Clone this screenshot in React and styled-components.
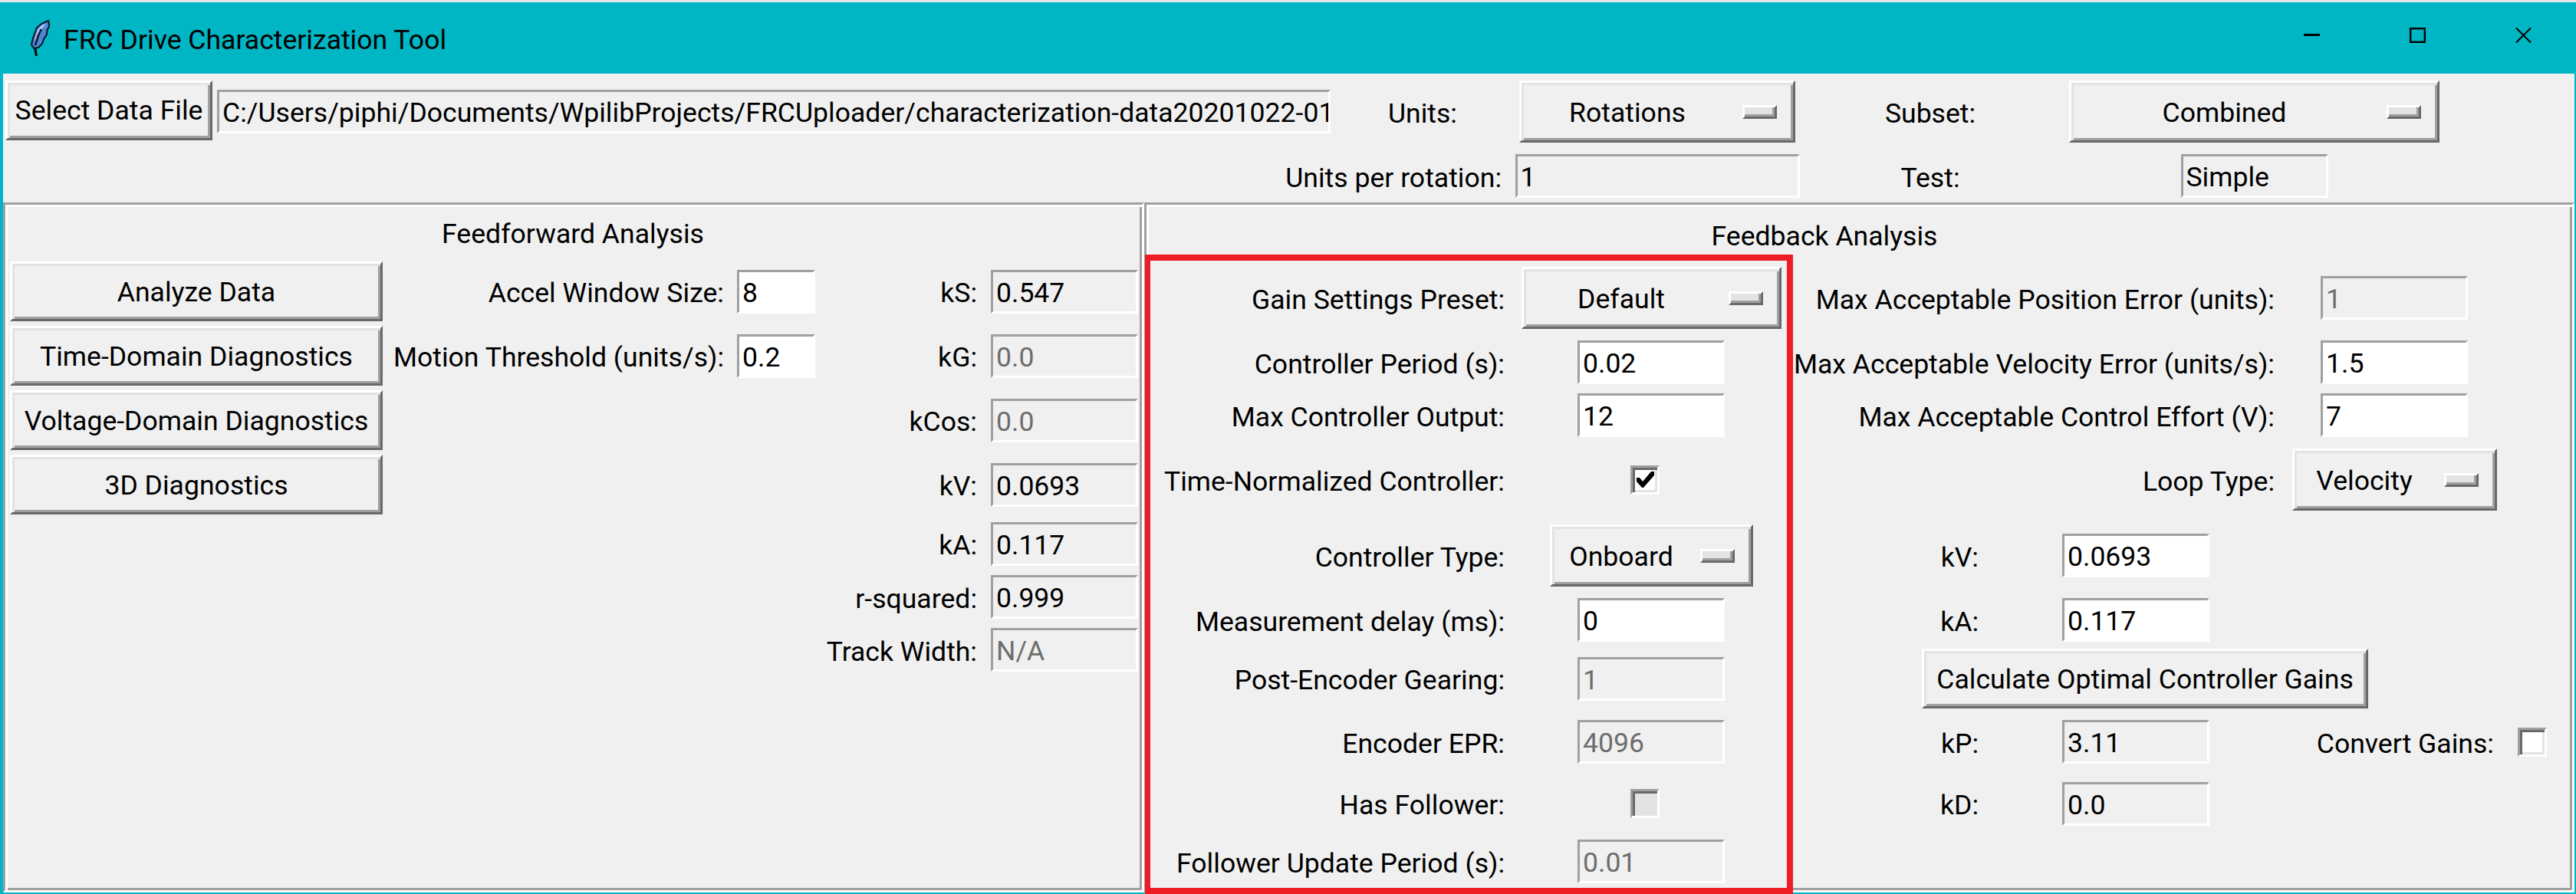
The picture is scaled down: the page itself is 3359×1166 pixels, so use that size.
import styled, { createGlobalStyle, css } from 'styled-components'

const GlobalStyle = createGlobalStyle`
  html, body {
    margin: 0;
    padding: 0;
    background: #00b5c4;
    overflow: hidden;
  }
  body {
    font-family: Roboto, "Noto Sans", "Liberation Sans", sans-serif;
    font-size: 35.6px;
    color: #000;
  }
`

const raised = css`
  box-sizing: border-box;
  border: 3px solid;
  border-color: #fff #696969 #696969 #fff;
  box-shadow: inset 3px 3px 0 #e3e3e3, inset -3px -3px 0 #a0a0a0;
`

const Window = styled.div`
  position: relative;
  width: 3359px;
  height: 1166px;
  box-sizing: border-box;
  border-top: 3px solid #e6e6e6;
  background: #00b5c4;
  display: flex;
  flex-direction: column;
  overflow: hidden;
`

const TitleBar = styled.div`
  height: 93px;
  flex: none;
  display: flex;
  align-items: center;
  padding-left: 40px;
`

const Title = styled.div`
  margin-left: 18px;
  flex: 1;
  padding-top: 4px;
`

const WinButton = styled.div`
  width: 138px;
  height: 93px;
  display: flex;
  align-items: center;
  justify-content: center;
  padding-bottom: 8px;
  box-sizing: border-box;
`

const Body = styled.div`
  flex: 1;
  margin: 0 2px 2px 4px;
  background: #f0f0f0;
  display: flex;
  flex-direction: column;
`

const Toolbar = styled.div`
  height: 168px;
  flex: none;
  box-sizing: border-box;
  padding: 6px 0 0 3px;
  display: grid;
  grid-template-columns: 273px 1460px 230px 382px 330px 515px;
  grid-template-rows: 87px 57px;
  row-gap: 12px;
  align-items: center;
`

const Panels = styled.div`
  flex: 1;
  display: flex;
`

const Panel = styled.div`
  box-sizing: border-box;
  height: 900px;
  width: ${(p) => p.$width}px;
  flex: none;
  border: 3px solid;
  border-color: #a0a0a0 #fff #fff #a0a0a0;
  box-shadow: inset 3px 3px 0 #fff, inset -3px -3px 0 #a0a0a0;
  padding-left: 3px;
  display: grid;
  grid-template-columns: ${(p) => p.$cols};
  grid-template-rows: ${(p) => p.$rows};
  align-items: center;
`

const PanelTitle = styled.div`
  grid-column: ${(p) => p.$span};
  grid-row: 1;
  text-align: center;
  padding-top: 4px;
`

const Label = styled.div`
  grid-column: ${(p) => p.$col || 'auto'};
  grid-row: ${(p) => p.$row || 'auto'};
  justify-self: ${(p) => p.$justify || 'end'};
  padding-right: ${(p) => (p.$pad === undefined ? 6 : p.$pad)}px;
  padding-top: 4px;
  white-space: nowrap;
`

const Entry = styled.div`
  grid-column: ${(p) => p.$col || 'auto'};
  grid-row: ${(p) => p.$row || 'auto'};
  justify-self: ${(p) => p.$justify || 'center'};
  box-sizing: border-box;
  width: ${(p) => p.$width || 192}px;
  height: 57px;
  margin-left: ${(p) => p.$left || 0}px;
  border: 3px solid;
  border-color: #a0a0a0 #fff #fff #a0a0a0;
  background: ${(p) => (p.$on ? '#fff' : '#f0f0f0')};
  color: ${(p) => (p.$off ? '#6d6d6d' : '#000')};
  padding: 1px 0 0 4px;
  line-height: 52px;
  white-space: nowrap;
  overflow: hidden;
`

const Button = styled.div`
  ${raised}
  grid-column: ${(p) => p.$col || 'auto'};
  grid-row: ${(p) => p.$row || 'auto'};
  justify-self: ${(p) => p.$justify || 'center'};
  width: ${(p) => p.$width}px;
  height: 78px;
  margin-left: ${(p) => p.$left || 0}px;
  margin-bottom: ${(p) => p.$lift || 0}px;
  padding-top: ${(p) => (p.$lift ? 0 : 2)}px;
  display: flex;
  align-items: center;
  justify-content: center;
  white-space: nowrap;
`

const MenuBox = styled.div`
  ${raised}
  grid-column: ${(p) => p.$col || 'auto'};
  grid-row: ${(p) => p.$row || 'auto'};
  justify-self: center;
  width: ${(p) => p.$width}px;
  height: 81px;
  display: flex;
  align-items: center;
`

const MenuText = styled.div`
  flex: 1;
  text-align: center;
  padding: 3px 12px 0 0;
`

const Indicator = styled.div`
  ${raised}
  width: 45px;
  height: 18px;
  flex: none;
  margin-right: 21px;
  box-shadow: inset -3px -3px 0 #a0a0a0;
  background: #e3e3e3;
`

const CheckBox = styled.div`
  grid-column: ${(p) => p.$col || 'auto'};
  grid-row: ${(p) => p.$row || 'auto'};
  justify-self: center;
  box-sizing: border-box;
  width: 38px;
  height: 38px;
  margin-right: ${(p) => p.$shift || 0}px;
  border: 3px solid;
  border-color: #a0a0a0 #fff #fff #a0a0a0;
  box-shadow: inset 3px 3px 0 #696969, inset -3px -3px 0 #e3e3e3;
  background: ${(p) => (p.$off ? '#e3e3e3' : '#fff')};
  display: flex;
  align-items: center;
  justify-content: center;
`

const RedBox = styled.div`
  position: absolute;
  left: 1493px;
  top: 329px;
  width: 845px;
  height: 834px;
  box-sizing: border-box;
  border: 8px solid #ee1c25;
  border-left-width: 7px;
  pointer-events: none;
`

function Feather() {
  return (
    <svg width="25" height="47" viewBox="0 0 25 47">
      <path d="M5 33 L7.5 47" stroke="#050505" strokeWidth="3" fill="none" />
      <path
        d="M23 1 L24.5 8 L21.5 13 L21 19 L17 25 L15 31 L10 36 L4 37 L1 32 L3 24 L5 18 L8 10 L14 5 Z"
        fill="#4f86d8"
        stroke="#0b1420"
        strokeWidth="2"
      />
      <path d="M20 5 L14 7 L9 13 L6 22 L5 29 L9 21 L13 14 Z" fill="#a9c4ef" />
      <path d="M14 12 L10 20 L6 33" stroke="#0c1a34" strokeWidth="2.6" fill="none" />
    </svg>
  )
}

function Check() {
  return (
    <svg width="23" height="21" viewBox="0 0 23 21">
      <path d="M0 8 L4 8 L8 13 L19 0 L23 0 L23 5 L9 21 L7 21 L0 13 Z" fill="#000" />
    </svg>
  )
}

function Menu({ text, width, col, row }) {
  return (
    <MenuBox $width={width} $col={col} $row={row}>
      <MenuText>{text}</MenuText>
      <Indicator />
    </MenuBox>
  )
}

const leftButtons = [
  'Analyze Data',
  'Time-Domain Diagnostics',
  'Voltage-Domain Diagnostics',
  '3D Diagnostics',
]

const leftValues = [
  { label: 'kS:', value: '0.547' },
  { label: 'kG:', value: '0.0', off: true },
  { label: 'kCos:', value: '0.0', off: true },
  { label: 'kV:', value: '0.0693' },
  { label: 'kA:', value: '0.117' },
  { label: 'r-squared:', value: '0.999' },
  { label: 'Track Width:', value: 'N/A', off: true },
]

export default function App() {
  return (
    <>
      <GlobalStyle />
      <Window>
        <TitleBar>
          <Feather />
          <Title>FRC Drive Characterization Tool</Title>
          <WinButton>
            <svg width="21" height="3"><rect width="21" height="3" fill="#000" /></svg>
          </WinButton>
          <WinButton>
            <svg width="21" height="20"><rect x="1.2" y="1.2" width="18.6" height="17.6" fill="none" stroke="#000" strokeWidth="2.4" /></svg>
          </WinButton>
          <WinButton>
            <svg width="21" height="20"><path d="M1 0.5 L20 19.5 M20 0.5 L1 19.5" stroke="#000" strokeWidth="2" /></svg>
          </WinButton>
        </TitleBar>
        <Body>
          <Toolbar>
            <Button $width={270} $col="1" $row="1" $justify="start" $lift={3}>Select Data File</Button>
            <Entry $width={1452} $col="2" $row="1" $justify="start" $left={3}>
              C:/Users/piphi/Documents/WpilibProjects/FRCUploader/characterization-data20201022-0133
            </Entry>
            <Label $col="3" $row="1" $justify="center" $pad={0}>Units:</Label>
            <Menu text="Rotations" width={360} col="4" row="1" />
            <Label $col="5" $row="1" $justify="center" $pad={0}>Subset:</Label>
            <Menu text="Combined" width={483} col="6" row="1" />
            <Label $col="2 / 4" $row="2" $pad={12}>Units per rotation:</Label>
            <Entry $width={371} $col="4" $row="2">1</Entry>
            <Label $col="5" $row="2" $justify="center" $pad={0}>Test:</Label>
            <Entry $col="6" $row="2">Simple</Entry>
          </Toolbar>
          <Panels>
            <Panel
              $width={1488}
              $cols="492px 448px 124px 206px 204px"
              $rows="71px 84px 84px 84px 84px 70px 69px 69px"
            >
              <PanelTitle $span="1 / -1">Feedforward Analysis</PanelTitle>
              {leftButtons.map((text, i) => (
                <Button key={text} $width={486} $col="1" $row={i + 2}>{text}</Button>
              ))}
              <Label $col="2" $row="2">Accel Window Size:</Label>
              <Entry $on $width={102} $col="3" $row="2">8</Entry>
              <Label $col="2" $row="3">Motion Threshold (units/s):</Label>
              <Entry $on $width={102} $col="3" $row="3">0.2</Entry>
              {leftValues.map((item, i) => [
                <Label key={item.label} $col="4" $row={i + 2}>{item.label}</Label>,
                <Entry key={item.label + 'v'} $off={item.off} $col="5" $row={i + 2} $justify="end">
                  {item.value}
                </Entry>,
              ])}
            </Panel>
            <Panel
              $width={1865}
              $cols="470px 370px 248px 398px 276px 84px"
              $rows="78px 87px 81px 57px 111px 87px 81px 72px 93px 68px 83px"
            >
              <PanelTitle $span="1 / 6">Feedback Analysis</PanelTitle>

              <Label $col="1" $row="2">Gain Settings Preset:</Label>
              <Menu text="Default" width={339} col="2" row="2" />
              <Label $col="1" $row="3">Controller Period (s):</Label>
              <Entry $on $col="2" $row="3">0.02</Entry>
              <Label $col="1" $row="4">Max Controller Output:</Label>
              <Entry $on $col="2" $row="4">12</Entry>
              <Label $col="1" $row="5">Time-Normalized Controller:</Label>
              <CheckBox $col="2" $row="5" $shift={16}><Check /></CheckBox>
              <Label $col="1" $row="6">Controller Type:</Label>
              <Menu text="Onboard" width={265} col="2" row="6" />
              <Label $col="1" $row="7">Measurement delay (ms):</Label>
              <Entry $on $col="2" $row="7">0</Entry>
              <Label $col="1" $row="8">Post-Encoder Gearing:</Label>
              <Entry $off $col="2" $row="8">1</Entry>
              <Label $col="1" $row="9">Encoder EPR:</Label>
              <Entry $off $col="2" $row="9">4096</Entry>
              <Label $col="1" $row="10">Has Follower:</Label>
              <CheckBox $off $col="2" $row="10" $shift={16} />
              <Label $col="1" $row="11">Follower Update Period (s):</Label>
              <Entry $off $col="2" $row="11">0.01</Entry>

              <Label $col="3 / 5" $row="2" $pad={18}>Max Acceptable Position Error (units):</Label>
              <Entry $off $col="5" $row="2">1</Entry>
              <Label $col="3 / 5" $row="3" $pad={18}>Max Acceptable Velocity Error (units/s):</Label>
              <Entry $on $col="5" $row="3">1.5</Entry>
              <Label $col="3 / 5" $row="4" $pad={18}>Max Acceptable Control Effort (V):</Label>
              <Entry $on $col="5" $row="4">7</Entry>
              <Label $col="3 / 5" $row="5" $pad={18}>Loop Type:</Label>
              <Menu text="Velocity" width={267} col="5" row="5" />

              <Label $col="3" $row="6">kV:</Label>
              <Entry $on $col="4" $row="6">0.0693</Entry>
              <Label $col="3" $row="7">kA:</Label>
              <Entry $on $col="4" $row="7">0.117</Entry>
              <Button $width={582} $col="3 / 6" $row="8" $justify="start" $left={168}>
                Calculate Optimal Controller Gains
              </Button>
              <Label $col="3" $row="9">kP:</Label>
              <Entry $col="4" $row="9">3.11</Entry>
              <Label $col="5" $row="9" $pad={8}>Convert Gains:</Label>
              <CheckBox $col="6" $row="9" />
              <Label $col="3" $row="10">kD:</Label>
              <Entry $col="4" $row="10">0.0</Entry>
            </Panel>
          </Panels>
        </Body>
        <RedBox />
      </Window>
    </>
  )
}
